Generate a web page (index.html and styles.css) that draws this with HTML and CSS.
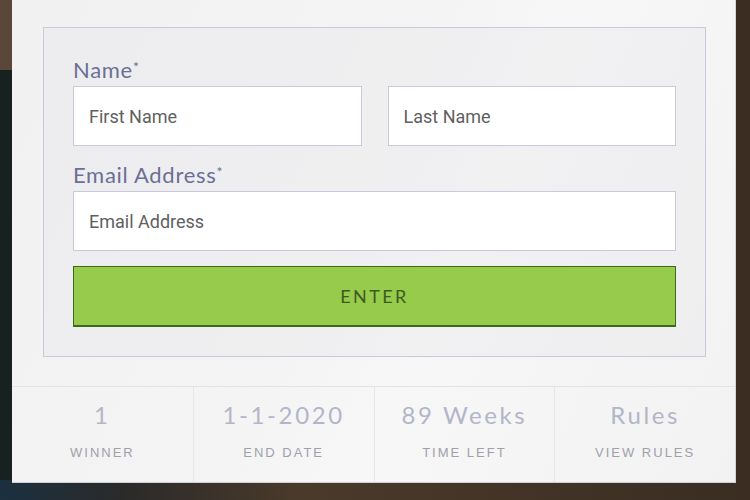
FILE: index.html
```html
<!DOCTYPE html>
<html lang="en">
<head>
<meta charset="utf-8">
<title>Giveaway Entry</title>
<link rel="stylesheet" href="styles.css">
</head>
<body>
<div class="backdrop">
  <div class="card">
    <form class="entry-form">
      <label class="field-label">Name<span class="req">*</span></label>
      <div class="name-row">
        <input class="text-input" type="text" placeholder="First Name">
        <input class="text-input" type="text" placeholder="Last Name">
      </div>
      <label class="field-label field-label-email">Email Address<span class="req">*</span></label>
      <input class="text-input" type="email" placeholder="Email Address">
      <button class="enter-btn" type="button">ENTER</button>
    </form>
    <div class="stats">
      <div class="stat">
        <div class="stat-value">1</div>
        <div class="stat-label">WINNER</div>
      </div>
      <div class="stat">
        <div class="stat-value">1-1-2020</div>
        <div class="stat-label">END DATE</div>
      </div>
      <div class="stat">
        <div class="stat-value">89 Weeks</div>
        <div class="stat-label">TIME LEFT</div>
      </div>
      <div class="stat">
        <div class="stat-value">Rules</div>
        <div class="stat-label">VIEW RULES</div>
      </div>
    </div>
  </div>
</div>
</body>
</html>
```

FILE: styles.css
```css
* { box-sizing: border-box; }

html, body {
  margin: 0;
  padding: 0;
  width: 750px;
  height: 500px;
  overflow: hidden;
}

body {
  background:
    linear-gradient(90deg, rgba(0,0,0,0) 0 736px, #3b2d21 736px),
    linear-gradient(90deg, #1b3040 0, #2a2a2a 120px, #4a3a2a 300px, #3a2d22 100%),
    #1a201e;
  background-size: 100% 100%, 100% 20px, 100% 100%;
  background-position: 0 0, 0 480px, 0 0;
  background-repeat: no-repeat;
}

.backdrop {
  width: 750px;
  height: 500px;
  padding-left: 12px;
  background: linear-gradient(180deg, #5a473a 0 70px, #172120 70px 480px, rgba(0,0,0,0) 480px) 0 0 / 12px 100% no-repeat;
}

.card {
  width: 724px;
  padding: 27px 29px 0 31px;
  background: linear-gradient(115deg, #f1f1f2 0%, #f4f4f5 45%, #f7f7f8 60%, #f2f2f3 100%);
  border-right: 1px solid #d4d4dc;
  border-bottom: 1px solid #cfcfd8;
}

.entry-form {
  display: flex;
  flex-direction: column;
  height: 330px;
  padding: 30px 29px 29px 29px;
  border: 1px solid #c9cad9;
  background: rgba(228, 228, 232, 0.35);
}

.field-label {
  display: block;
  font-family: Lato, "Open Sans", sans-serif;
  font-size: 22px;
  line-height: 24px;
  letter-spacing: 0.7px;
  color: #6b6f95;
  margin-bottom: 4px;
}

.req {
  font-size: 14px;
  line-height: 0;
  vertical-align: 6px;
}

.field-label-email {
  margin-top: 17px;
}

.name-row {
  display: flex;
  gap: 26px;
}

.name-row .text-input {
  flex: 1 1 0;
  min-width: 0;
}

.text-input {
  display: block;
  height: 60px;
  width: 100%;
  padding: 0 15px;
  border: 1px solid #c9cad9;
  background: #ffffff;
  font-family: Roboto, "Liberation Sans", sans-serif;
  font-size: 18px;
  color: #555;
  outline: none;
}

.text-input::placeholder {
  color: #5f5f5f;
  opacity: 1;
}

.enter-btn {
  margin-top: 15px;
  height: 61px;
  width: 100%;
  border: 1px solid #3c6a18;
  border-bottom-width: 2px;
  background: #96cb4b;
  font-family: Lato, "Open Sans", sans-serif;
  font-size: 18px;
  font-weight: 400;
  letter-spacing: 2.4px;
  color: #3e5a22;
  cursor: pointer;
}

.stats {
  display: grid;
  grid-template-columns: repeat(4, 1fr);
  margin: 29px -29px 0 -31px;
  border-top: 1px solid #e2e2e7;
}

.stat {
  text-align: center;
  padding: 13px 0 21px;
  border-left: 1px solid #e6e6ea;
}

.stat:first-child {
  border-left: none;
}

.stat-value {
  font-family: Lato, "Open Sans", sans-serif;
  font-size: 24px;
  line-height: 30px;
  letter-spacing: 2.6px;
  color: #b3b5c8;
}

.stat-label {
  margin-top: 15px;
  font-family: "Liberation Sans", Arial, sans-serif;
  font-size: 13px;
  line-height: 16px;
  letter-spacing: 2px;
  color: #9fa0a8;
}
```
